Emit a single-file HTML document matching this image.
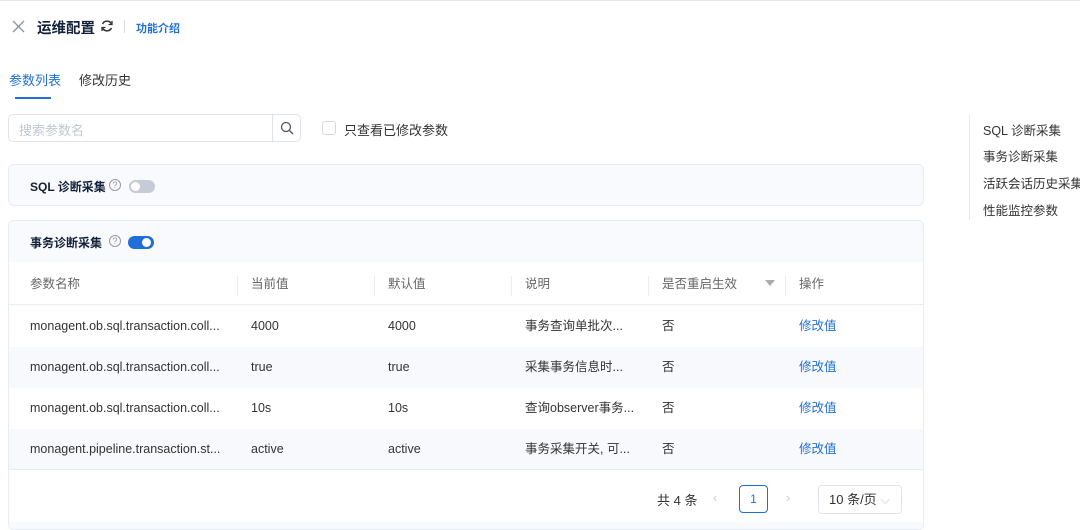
<!DOCTYPE html>
<html><head><meta charset="utf-8"><style>
*{box-sizing:border-box;margin:0;padding:0}
body{width:1080px;height:523px;overflow:hidden;background:#fff;font-family:"Liberation Sans","Noto Sans CJK SC",sans-serif;color:#132039;position:relative;font-size:13px}
.a{position:absolute;white-space:nowrap}
.blue{color:#1f6fd8}
.card{position:absolute;left:8px;width:916px;border:1px solid #e8ecf3;border-radius:6px;background:#f8fafd}
.row{position:absolute;left:9px;width:914px;height:41px}
.cell{position:absolute;top:0;line-height:41px;font-size:12.5px;color:#333}
.cell.blue{color:#1f6fd8}
</style></head><body>
<div class="a" style="left:0;top:0;width:1080px;height:1px;background:#e8e8e8"></div>
<svg class="a" style="left:12px;top:20px" width="13" height="13"><path d="M1 1L12 12M12 1L1 12" stroke="#8b93a3" stroke-width="1.3"/></svg>
<div class="a" style="left:37px;top:17px;font-size:14.5px;font-weight:bold;color:#132039">运维配置</div>
<svg class="a" style="left:100px;top:19px" width="14" height="14" viewBox="0 0 14 14"><path d="M11.5 5A5 5 0 0 0 2.5 5M2.5 9A5 5 0 0 0 11.5 9" stroke="#333" stroke-width="1.5" fill="none"/><path d="M12 2v3.5H8.5M2 12V8.5h3.5" stroke="#333" stroke-width="1.3" fill="none"/></svg>
<div class="a" style="left:124px;top:20px;width:1px;height:13px;background:#d8dce3"></div>
<div class="a blue" style="left:136px;top:20px;font-size:11px;font-weight:bold">功能介绍</div>
<div class="a blue" style="left:9px;top:70px;font-size:13px">参数列表</div>
<div class="a" style="left:15px;top:97px;width:36px;height:2px;background:#1f6fd8"></div>
<div class="a" style="left:79px;top:70px;font-size:13px;color:#333">修改历史</div>
<div class="a" style="left:8px;top:114px;width:293px;height:28px;border:1px solid #dfe3ea;border-radius:5px"></div>
<div class="a" style="left:272px;top:114px;width:1px;height:28px;background:#dfe3ea"></div>
<div class="a" style="left:19px;top:120px;color:#c0c6d0;font-size:13px">搜索参数名</div>
<svg class="a" style="left:280px;top:121px" width="14" height="14"><circle cx="6" cy="6" r="4.5" stroke="#555" stroke-width="1.3" fill="none"/><path d="M9.5 9.5L13 13" stroke="#555" stroke-width="1.3"/></svg>
<div class="a" style="left:322px;top:121px;width:14px;height:14px;border:1px solid #d5d9e0;border-radius:3px"></div>
<div class="a" style="left:344px;top:120px;font-size:13px;color:#333">只查看已修改参数</div>
<div class="card" style="top:164px;height:42px"></div>
<div class="a" style="left:30px;top:178px;font-size:12px;font-weight:bold">SQL 诊断采集</div>
<div class="a" style="left:109px;top:179px;width:12px;height:12px;border:1px solid #999;border-radius:50%;font-size:9px;line-height:10px;text-align:center;color:#999">?</div>
<div class="a" style="left:129px;top:180px;width:26px;height:13px;border-radius:7px;background:#c6ccd6"></div>
<div class="a" style="left:131px;top:182px;width:9px;height:9px;border-radius:50%;background:#fff"></div>
<div class="card" style="top:220px;height:310px"></div>
<div class="a" style="left:30px;top:234px;font-size:12px;font-weight:bold">事务诊断采集</div>
<div class="a" style="left:109px;top:235px;width:12px;height:12px;border:1px solid #999;border-radius:50%;font-size:9px;line-height:10px;text-align:center;color:#999">?</div>
<div class="a" style="left:128px;top:236px;width:26px;height:13px;border-radius:7px;background:#1f6fd8"></div>
<div class="a" style="left:142px;top:238px;width:9px;height:9px;border-radius:50%;background:#fff"></div>
<div class="a" style="left:9px;top:262px;width:914px;height:260px;background:#fff"></div>
<div class="row" style="top:264px;border-bottom:1px solid #e8ecf3">
<div class="cell" style="left:21px;color:#666">参数名称</div><div class="cell" style="left:242px;color:#666">当前值</div><div class="cell" style="left:379px;color:#666">默认值</div><div class="cell" style="left:516px;color:#666">说明</div><div class="cell" style="left:653px;color:#666">是否重启生效</div><div class="cell" style="left:790px;color:#666">操作</div>
<div class="a" style="left:228px;top:12px;width:1px;height:20px;background:#e8ecf3"></div><div class="a" style="left:365px;top:12px;width:1px;height:20px;background:#e8ecf3"></div><div class="a" style="left:502px;top:12px;width:1px;height:20px;background:#e8ecf3"></div><div class="a" style="left:639px;top:12px;width:1px;height:20px;background:#e8ecf3"></div><div class="a" style="left:776px;top:12px;width:1px;height:20px;background:#e8ecf3"></div>
<div class="a" style="left:756px;top:16px;width:0;height:0;border-left:5px solid transparent;border-right:5px solid transparent;border-top:6px solid #aaa"></div>
</div>
<div class="row" style="top:306px"><div class="cell" style="left:21px">monagent.ob.sql.transaction.coll...</div><div class="cell" style="left:242px">4000</div><div class="cell" style="left:379px">4000</div><div class="cell" style="left:516px">事务查询单批次...</div><div class="cell" style="left:653px">否</div><div class="cell blue" style="left:790px">修改值</div></div>
<div class="row" style="top:347px;background:#f7f9fc"><div class="cell" style="left:21px">monagent.ob.sql.transaction.coll...</div><div class="cell" style="left:242px">true</div><div class="cell" style="left:379px">true</div><div class="cell" style="left:516px">采集事务信息时...</div><div class="cell" style="left:653px">否</div><div class="cell blue" style="left:790px">修改值</div></div>
<div class="row" style="top:388px"><div class="cell" style="left:21px">monagent.ob.sql.transaction.coll...</div><div class="cell" style="left:242px">10s</div><div class="cell" style="left:379px">10s</div><div class="cell" style="left:516px">查询observer事务...</div><div class="cell" style="left:653px">否</div><div class="cell blue" style="left:790px">修改值</div></div>
<div class="row" style="top:429px;background:#f7f9fc;border-bottom:1px solid #e8ecf3"><div class="cell" style="left:21px">monagent.pipeline.transaction.st...</div><div class="cell" style="left:242px">active</div><div class="cell" style="left:379px">active</div><div class="cell" style="left:516px">事务采集开关, 可...</div><div class="cell" style="left:653px">否</div><div class="cell blue" style="left:790px">修改值</div></div>
<div class="a" style="left:657px;top:490px;font-size:13px;color:#333">共 4 条</div>
<div class="a" style="left:713px;top:490px;color:#ccc">‹</div>
<div class="a" style="left:739px;top:485px;width:29px;height:28px;border:1px solid #1f6fd8;border-radius:4px;text-align:center;line-height:26px;color:#1f6fd8;font-size:12px">1</div>
<div class="a" style="left:786px;top:490px;color:#ccc">›</div>
<div class="a" style="left:818px;top:485px;width:84px;height:29px;border:1px solid #e0e4ea;border-radius:4px;padding-left:10px;line-height:27px;color:#333">10 条/页 <span style="color:#ccc">⌵</span></div>
<div class="a" style="left:969px;top:115px;width:1px;height:105px;background:#e5e8ee"></div>
<div class="a" style="left:983px;top:120px;color:#333;font-size:12.5px">SQL 诊断采集</div>
<div class="a" style="left:983px;top:146px;color:#333;font-size:12.5px">事务诊断采集</div>
<div class="a" style="left:983px;top:173px;color:#333;font-size:12.5px">活跃会话历史采集</div>
<div class="a" style="left:983px;top:200px;color:#333;font-size:12.5px">性能监控参数</div>
</body></html>
